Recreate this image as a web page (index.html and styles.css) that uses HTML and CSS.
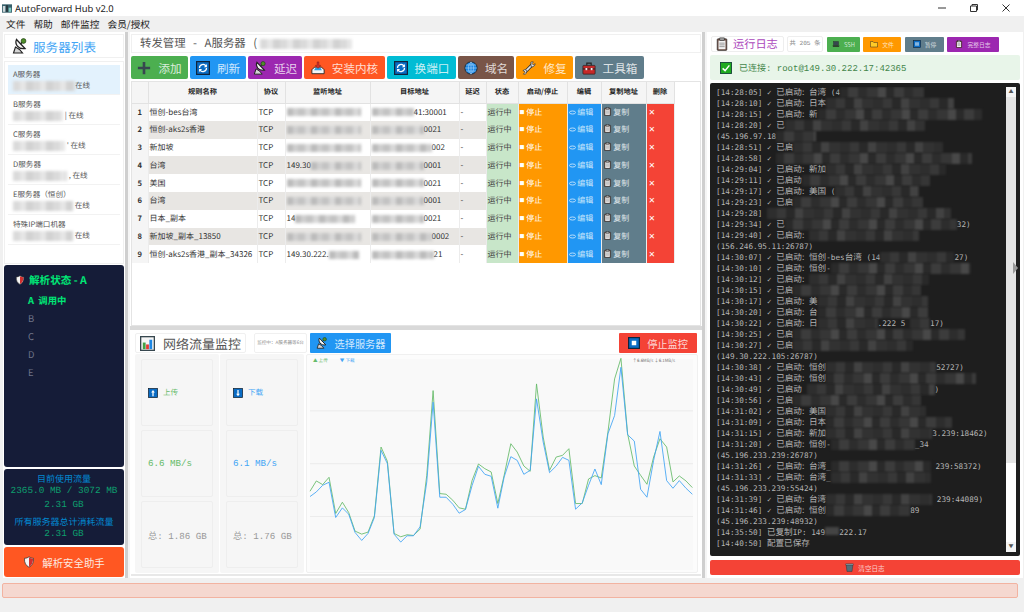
FILE: index.html
```html
<!DOCTYPE html>
<html lang="en">
<head>
  <meta charset="UTF-8">
  <title>AutoForward Hub v2.0</title>
  <link rel="stylesheet" href="styles.css">
</head>
<body>
  <!-- Shared icons -->
  <svg class="icon-defs" width="0" height="0">
    <symbol id="i-dish" viewBox="0 0 16 16">
      <path d="M3.500 9 L1.500 15 H10.500 L7.500 11.500 Z" fill="#d5d5d5" stroke="#222" stroke-width="1.100"/>
      <path d="M4.500 1.500 C2.500 6 6 11.500 13 10.500 Z" fill="#f4f4f4" stroke="#222" stroke-width="1.300"/>
      <path d="M8.500 6 L11 3.500" stroke="#222" stroke-width="1.200"/>
      <circle cx="11.500" cy="3" r="2.400" fill="#4f8f2a" stroke="#1d3a10" stroke-width=".7"/>
    </symbol>
    <symbol id="i-plus" viewBox="0 0 16 16">
      <path d="M6.500 1 H9.500 V6.500 H15 V9.500 H9.500 V15 H6.500 V9.500 H1 V6.500 H6.500 Z" fill="#37474f"/>
    </symbol>
    <symbol id="i-refresh" viewBox="0 0 16 16">
      <rect x=".7" y=".7" width="14.600" height="14.600" fill="#0a6cc4" stroke="#10243c" stroke-width="1.400"/>
      <path d="M4 8 A4 4 0 0 1 11.500 6 M12 8 A4 4 0 0 1 4.500 10" fill="none" stroke="#fff" stroke-width="1.400"/>
      <path d="M12.500 3.500 V7 H9 Z M3.500 12.500 V9 H7 Z" fill="#fff"/>
    </symbol>
    <symbol id="i-tray" viewBox="0 0 16 16">
      <path d="M1 10 L4 7 H12 L15 10 V14.500 H1 Z" fill="#f5f5f5" stroke="#222"/>
      <path d="M3.500 10.500 H12.500 L11 8 H5 Z" fill="#29a0e8"/>
      <path d="M7 1 H9 V5 H11 L8 8.500 L5 5 H7 Z" fill="#d32f2f" stroke="#511" stroke-width=".4"/>
    </symbol>
    <symbol id="i-globe" viewBox="0 0 16 16">
      <circle cx="8" cy="8" r="7" fill="#1e88e5" stroke="#152535"/>
      <path d="M1 8 H15 M8 1 V15 M2.500 4.500 H13.500 M2.500 11.500 H13.500 M8 1 C4 5 4 11 8 15 M8 1 C12 5 12 11 8 15" fill="none" stroke="#bbdefb" stroke-width=".6"/>
    </symbol>
    <symbol id="i-wrench" viewBox="0 0 16 16">
      <path d="M3.500 12.500 L12 4" stroke="#333" stroke-width="3.800"/>
      <path d="M3.500 12.500 L12 4" stroke="#e4e4e4" stroke-width="2"/>
      <path d="M10 1.500 A3.500 3.500 0 0 1 13 1 L11.500 3 L13 4.500 L15 3 A3.500 3.500 0 0 1 10.500 6.500 Z" fill="#e4e4e4" stroke="#333" stroke-width=".8"/>
      <path d="M1 11 A3 3 0 0 1 5.500 11 L5 14 A3 3 0 0 1 1.500 15 L3.500 13 L2.500 11.500 Z" fill="#e4e4e4" stroke="#333" stroke-width=".8"/>
    </symbol>
    <symbol id="i-toolbox" viewBox="0 0 16 16">
      <path d="M5.500 5 V2.500 H10.500 V5" fill="none" stroke="#222" stroke-width="1.300"/>
      <rect x="1" y="5" width="14" height="10" rx="1" fill="#c62828" stroke="#222" stroke-width=".8"/>
      <rect x="1" y="8.500" width="14" height="1.200" fill="#222"/>
      <rect x="4" y="8" width="2" height="2.500" fill="#eee"/>
      <rect x="10" y="8" width="2" height="2.500" fill="#eee"/>
    </symbol>
    <symbol id="i-clip" viewBox="0 0 16 16">
      <rect x="2.500" y="2" width="11" height="13.300" rx="1" fill="#6d4c41" stroke="#222" stroke-width=".7"/>
      <rect x="4" y="4" width="8" height="10" fill="#f2f2f2"/>
      <rect x="5.500" y="1" width="5" height="3" fill="#9e9e9e" stroke="#222" stroke-width=".6"/>
      <path d="M5 7 H11 M5 9 H11 M5 11 H11" stroke="#777" stroke-width=".8"/>
    </symbol>
    <symbol id="i-shield" viewBox="0 0 16 16">
      <path d="M8 1 C10 2.500 12 3 14 3 C14.500 9 12 13 8 15 C4 13 1.500 9 2 3 C4 3 6 2.500 8 1 Z" fill="#f5f5f5" stroke="#333"/>
      <path d="M8 2 V14.500 C11 13 13.500 9 13.500 3.500 C11.500 3.500 9.500 3 8 2 Z" fill="#d32f2f"/>
    </symbol>
    <symbol id="i-chart" viewBox="0 0 16 16">
      <rect x=".7" y=".7" width="14.600" height="14.600" fill="#f5f5f5" stroke="#37474f" stroke-width="1.400"/>
      <rect x="3" y="7" width="3" height="7" fill="#43a047"/>
      <rect x="6.500" y="9" width="3" height="5" fill="#e53935"/>
      <rect x="10" y="4" width="3" height="10" fill="#1e88e5"/>
    </symbol>
    <symbol id="i-stop" viewBox="0 0 16 16">
      <rect x=".8" y=".8" width="14.400" height="14.400" fill="#0a6cc4" stroke="#10243c" stroke-width="1.600"/>
      <rect x="5" y="5" width="6" height="6" fill="#fff"/>
    </symbol>
    <symbol id="i-up" viewBox="0 0 16 16">
      <rect x=".8" y=".8" width="14.400" height="14.400" fill="#0a6cc4" stroke="#123" stroke-width="1.200"/>
      <path d="M8 3 L11 7 H9 V13 H7 V7 H5 Z" fill="#fff"/>
    </symbol>
    <symbol id="i-down" viewBox="0 0 16 16">
      <rect x=".8" y=".8" width="14.400" height="14.400" fill="#0a6cc4" stroke="#123" stroke-width="1.200"/>
      <path d="M8 13 L11 9 H9 V3 H7 V9 H5 Z" fill="#fff"/>
    </symbol>
    <symbol id="i-laptop" viewBox="0 0 16 16">
      <rect x="3" y="3" width="10" height="7.500" fill="#37474f" stroke="#222" stroke-width=".7"/>
      <path d="M1 11 H15 L14 13.500 H2 Z" fill="#222"/>
    </symbol>
    <symbol id="i-folder" viewBox="0 0 16 16">
      <path d="M1 3 H6 L7.500 5 H15 V14 H1 Z" fill="#ffca28" stroke="#222" stroke-width=".9"/>
    </symbol>
    <symbol id="i-pause" viewBox="0 0 16 16">
      <rect x=".8" y=".8" width="14.400" height="14.400" fill="#0a6cc4" stroke="#123" stroke-width="1.200"/>
      <path d="M5 4.500 H7 V11.500 H5 Z M9 4.500 H11 V11.500 H9 Z" fill="#fff"/>
    </symbol>
    <symbol id="i-trash" viewBox="0 0 16 16">
      <path d="M2 3 H14 L12.500 15 H3.500 Z" fill="#546e7a" stroke="#263238" stroke-width=".8"/>
      <rect x="1.500" y="1.500" width="13" height="2" fill="#90a4ae" stroke="#263238" stroke-width=".6"/>
    </symbol>
    <symbol id="i-check" viewBox="0 0 16 16">
      <rect x=".7" y=".7" width="14.600" height="14.600" fill="#1faa1f" stroke="#143" stroke-width="1.200"/>
      <path d="M3.500 8.500 L6.800 11.500 L12.500 4.500" fill="none" stroke="#fff" stroke-width="2"/>
    </symbol>
    <symbol id="i-pencil" viewBox="0 0 16 16">
      <ellipse cx="8" cy="8" rx="7" ry="3.500" fill="none" stroke="#cfe8fb" stroke-width="2"/>
    </symbol>
  </svg>

  <!-- Title bar -->
  <header class="titlebar">
    <svg class="app-icon" viewBox="0 0 12 10"><rect width="12" height="10" fill="#37606b"/><rect x="1" y="2" width="3" height="7" fill="#cfd8dc"/><rect x="5" y="1" width="2" height="8" fill="#263238"/><rect x="8" y="4" width="3" height="5" fill="#80cbc4"/></svg>
    <span class="app-name">AutoForward Hub v2.0</span>
    <div class="win-controls">
      <svg viewBox="0 0 10 10"><path d="M1 5 H9" stroke="#333"/></svg>
      <svg viewBox="0 0 10 10"><path d="M1.500 3 H7.500 V8.500 H1.500 Z M3 3 V1.500 H8.500 V7 H7.500" fill="none" stroke="#333"/></svg>
      <svg viewBox="0 0 10 10"><path d="M1.500 1.500 L8.500 8.500 M8.500 1.500 L1.500 8.500" stroke="#333"/></svg>
    </div>
  </header>

  <!-- Menu -->
  <nav class="menubar">
    <a>文件</a>
    <a>帮助</a>
    <a>邮件监控</a>
    <a>会员/授权</a>
  </nav>

  <main class="main">
    <!-- Left column -->
    <aside class="left">
      <div class="list-title">
        <svg class="ico-16"><use href="#i-dish"/></svg>
        <span>服务器列表</span>
      </div>
      <div class="server-list">
        <div class="server active"><div>A服务器</div><div class="server-sub"><span class="smear w62"></span>在线</div></div>
        <div class="server"><div>B服务器</div><div class="server-sub"><span class="smear w50"></span> | 在线</div></div>
        <div class="server"><div>C服务器</div><div class="server-sub"><span class="smear w52"></span> ' 在线</div></div>
        <div class="server"><div>D服务器</div><div class="server-sub"><span class="smear w54"></span> , 在线</div></div>
        <div class="server"><div>E服务器（恒创）</div><div class="server-sub"><span class="smear w60"></span> 在线</div></div>
        <div class="server"><div>特殊IP端口机器</div><div class="server-sub"><span class="smear w60"></span> 在线</div></div>
      </div>

      <div class="dns-status">
        <div class="dns-title"><svg class="ico-10"><use href="#i-shield"/></svg>解析状态 - A</div>
        <div class="dns-row on">A&nbsp; 调用中</div>
        <div class="dns-row">B</div>
        <div class="dns-row">C</div>
        <div class="dns-row">D</div>
        <div class="dns-row">E</div>
      </div>

      <div class="usage">
        <div class="usage-label">目前使用流量</div>
        <div class="usage-val">2365.0 MB / 3072 MB</div>
        <div class="usage-val tall">2.31 GB</div>
        <div class="usage-label">所有服务器总计消耗流量</div>
        <div class="usage-val">2.31 GB</div>
      </div>

      <button class="safety-btn"><svg class="ico-12"><use href="#i-shield"/></svg>解析安全助手</button>
    </aside>

    <div class="splitter"></div>

    <!-- Center column -->
    <section class="center">
      <div class="forward-title">转发管理 - A服务器 (<span class="smear w92"></span></div>

      <div class="toolbar">
        <button class="tool green w57"><svg class="ico-14"><use href="#i-plus"/></svg>添加</button>
        <button class="tool blue w56"><svg class="ico-14"><use href="#i-refresh"/></svg>刷新</button>
        <button class="tool purple w54"><svg class="ico-14"><use href="#i-dish"/></svg>延迟</button>
        <button class="tool deep w81"><svg class="ico-14"><use href="#i-tray"/></svg>安装内核</button>
        <button class="tool cyan w69"><svg class="ico-14"><use href="#i-refresh"/></svg>换端口</button>
        <button class="tool brown w56"><svg class="ico-14"><use href="#i-globe"/></svg>域名</button>
        <button class="tool orange w57"><svg class="ico-14"><use href="#i-wrench"/></svg>修复</button>
        <button class="tool slate w69"><svg class="ico-14"><use href="#i-toolbox"/></svg>工具箱</button>
      </div>

      <div class="rules-wrap">
        <table class="rules">
          <colgroup>
            <col class="c-no"><col class="c-name"><col class="c-proto"><col class="c-addr"><col class="c-dest"><col class="c-delay"><col class="c-state"><col class="c-run"><col class="c-edit"><col class="c-copy"><col class="c-del">
          </colgroup>
          <thead>
            <tr><th></th><th>规则名称</th><th>协议</th><th>监听地址</th><th>目标地址</th><th>延迟</th><th>状态</th><th>启动/停止</th><th>编辑</th><th>复制地址</th><th>删除</th></tr>
          </thead>
          <tbody>
            <tr><td class="no">1</td><td>恒创-bes台湾</td><td>TCP</td><td><span class="smear cell w74"></span></td><td><span class="smear cell w42"></span>41:30001</td><td>-</td><td class="st">运行中</td><td class="run"><b>■</b> 停止</td><td class="edit"><svg class="ico-7"><use href="#i-pencil"/></svg> 编辑</td><td class="copy"><svg class="ico-9"><use href="#i-clip"/></svg> 复制</td><td class="del">✕</td></tr>
            <tr><td class="no">2</td><td>恒创-aks2s香港</td><td>TCP</td><td><span class="smear cell w74"></span></td><td><span class="smear cell w52"></span>0021</td><td>-</td><td class="st">运行中</td><td class="run"><b>■</b> 停止</td><td class="edit"><svg class="ico-7"><use href="#i-pencil"/></svg> 编辑</td><td class="copy"><svg class="ico-9"><use href="#i-clip"/></svg> 复制</td><td class="del">✕</td></tr>
            <tr><td class="no">3</td><td>新加坡</td><td>TCP</td><td><span class="smear cell w74"></span></td><td><span class="smear cell w60"></span>002</td><td>-</td><td class="st">运行中</td><td class="run"><b>■</b> 停止</td><td class="edit"><svg class="ico-7"><use href="#i-pencil"/></svg> 编辑</td><td class="copy"><svg class="ico-9"><use href="#i-clip"/></svg> 复制</td><td class="del">✕</td></tr>
            <tr><td class="no">4</td><td>台湾</td><td>TCP</td><td>149.30<span class="smear cell w50"></span></td><td><span class="smear cell w52"></span>0001</td><td>-</td><td class="st">运行中</td><td class="run"><b>■</b> 停止</td><td class="edit"><svg class="ico-7"><use href="#i-pencil"/></svg> 编辑</td><td class="copy"><svg class="ico-9"><use href="#i-clip"/></svg> 复制</td><td class="del">✕</td></tr>
            <tr><td class="no">5</td><td>美国</td><td>TCP</td><td><span class="smear cell w74"></span></td><td><span class="smear cell w52"></span>0021</td><td>-</td><td class="st">运行中</td><td class="run"><b>■</b> 停止</td><td class="edit"><svg class="ico-7"><use href="#i-pencil"/></svg> 编辑</td><td class="copy"><svg class="ico-9"><use href="#i-clip"/></svg> 复制</td><td class="del">✕</td></tr>
            <tr><td class="no">6</td><td>台湾</td><td>TCP</td><td><span class="smear cell w74"></span></td><td><span class="smear cell w52"></span>0001</td><td>-</td><td class="st">运行中</td><td class="run"><b>■</b> 停止</td><td class="edit"><svg class="ico-7"><use href="#i-pencil"/></svg> 编辑</td><td class="copy"><svg class="ico-9"><use href="#i-clip"/></svg> 复制</td><td class="del">✕</td></tr>
            <tr><td class="no">7</td><td>日本_副本</td><td>TCP</td><td>14<span class="smear cell w60"></span></td><td><span class="smear cell w52"></span>0021</td><td>-</td><td class="st">运行中</td><td class="run"><b>■</b> 停止</td><td class="edit"><svg class="ico-7"><use href="#i-pencil"/></svg> 编辑</td><td class="copy"><svg class="ico-9"><use href="#i-clip"/></svg> 复制</td><td class="del">✕</td></tr>
            <tr><td class="no">8</td><td>新加坡_副本_13850</td><td>TCP</td><td><span class="smear cell w74"></span></td><td><span class="smear cell w60"></span>0002</td><td>-</td><td class="st">运行中</td><td class="run"><b>■</b> 停止</td><td class="edit"><svg class="ico-7"><use href="#i-pencil"/></svg> 编辑</td><td class="copy"><svg class="ico-9"><use href="#i-clip"/></svg> 复制</td><td class="del">✕</td></tr>
            <tr><td class="no">9</td><td>恒创-aks2s香港_副本_34326</td><td>TCP</td><td>149.30.222.<span class="smear cell w30"></span></td><td><span class="smear cell w62"></span>21</td><td>-</td><td class="st">运行中</td><td class="run"><b>■</b> 停止</td><td class="edit"><svg class="ico-7"><use href="#i-pencil"/></svg> 编辑</td><td class="copy"><svg class="ico-9"><use href="#i-clip"/></svg> 复制</td><td class="del">✕</td></tr>
          </tbody>
        </table>
      </div>

      <div class="hsplit"></div>

      <!-- Traffic monitor -->
      <div class="monitor">
        <div class="monitor-bar">
          <div class="monitor-title"><svg class="ico-15"><use href="#i-chart"/></svg>网络流量监控</div>
          <div class="monitor-note">监控中：A服务器等6台</div>
          <button class="mon-btn select"><svg class="ico-12"><use href="#i-dish"/></svg>选择服务器</button>
          <button class="mon-btn halt"><svg class="ico-12"><use href="#i-stop"/></svg>停止监控</button>
        </div>
        <div class="monitor-body">
          <div class="stat-col">
            <div class="stat"><span class="stat-head up"><svg class="ico-10"><use href="#i-up"/></svg>上传</span></div>
            <div class="stat"><span class="speed up">6.6 MB/s</span></div>
            <div class="stat"><span class="total">总: 1.86 GB</span></div>
          </div>
          <div class="stat-col">
            <div class="stat"><span class="stat-head down"><svg class="ico-10"><use href="#i-down"/></svg>下载</span></div>
            <div class="stat"><span class="speed down">6.1 MB/s</span></div>
            <div class="stat"><span class="total">总: 1.76 GB</span></div>
          </div>
          <div class="chart">
            <div class="legend"><span class="up">▲ 上传</span><span class="down">▼ 下载</span></div>
            <div class="legend-now">↑6.6MB/s ↓6.1MB/s</div>
            <svg class="chart-svg" viewBox="28 100 1148 635" preserveAspectRatio="none">
              <path d="M28 256 H1176 M28 415 H1176 M28 574 H1176" stroke="#e9e9e9" stroke-width="2.400" fill="none"/>
              <polyline class="line-up" points="28,498 47,467 66,478 85,456 105,565 125,531 144,562 163,618 183,627 202,621 221,572 241,365 260,408 280,625 300,635 319,629 338,631 358,612 378,450 397,195 417,505 436,507 456,525 475,548 494,552 514,465 533,416 552,430 571,440 591,535 610,450 630,355 649,380 669,422 688,438 707,175 727,335 746,435 766,395 785,390 804,370 824,535 844,535 863,461 882,451 901,458 921,320 941,160 960,98 980,325 1000,422 1019,450 1038,477 1058,395 1077,340 1097,365 1116,470 1135,452 1155,467 1174,487"/>
              <polyline class="line-down" points="28,514 47,500 66,480 85,471 105,577 125,548 144,567 163,622 183,646 202,625 221,577 241,375 260,415 280,627 300,651 319,632 338,632 358,605 378,470 397,230 417,516 436,516 456,537 475,564 494,553 514,480 533,423 552,447 571,453 591,549 610,455 630,394 649,405 669,447 688,435 707,220 727,350 746,442 766,422 785,396 804,405 824,552 844,533 863,480 882,431 901,478 921,325 941,270 960,125 980,328 1000,347 1019,492 1038,516 1058,405 1077,318 1097,466 1116,489 1135,466 1155,489 1174,507"/>
            </svg>
          </div>
        </div>
      </div>
    </section>

    <div class="splitter"></div>

    <!-- Right column -->
    <section class="right">
      <div class="log-head">
        <div class="log-title"><svg class="ico-14"><use href="#i-clip"/></svg>运行日志</div>
        <div class="log-count">共 205 条</div>
        <button class="log-btn b-ssh"><svg class="ico-8"><use href="#i-laptop"/></svg>SSH</button>
        <button class="log-btn b-file"><svg class="ico-8"><use href="#i-folder"/></svg>文件</button>
        <button class="log-btn b-pause"><svg class="ico-8"><use href="#i-pause"/></svg>暂停</button>
        <button class="log-btn b-full"><svg class="ico-8"><use href="#i-clip"/></svg>完整日志</button>
      </div>
      <div class="conn"><svg class="ico-12"><use href="#i-check"/></svg>已连接: root@149.30.222.17:42365</div>

      <div class="log-box">
        <div class="log-lines">
          <div>[14:28:05] ✓ <span class="zh">已启动:</span> <span class="zh">台湾</span> (4<span class="mosaic w84"></span></div>
          <div>[14:28:10] ✓ <span class="zh">已启动:</span> <span class="zh">日本</span><span class="mosaic w128"></span></div>
          <div>[14:28:15] ✓ <span class="zh">已启动:</span> <span class="zh">新</span><span class="mosaic w164"></span></div>
          <div>[14:28:20] ✓ <span class="zh">已</span><span class="mosaic w140"></span></div>
          <div>(45.196.97.18<span class="mosaic w40"></span></div>
          <div>[14:28:51] ✓ <span class="zh">已启</span><span class="mosaic w150"></span></div>
          <div>[14:28:58] ✓ <span class="mosaic w196"></span></div>
          <div>[14:29:04] ✓ <span class="zh">已启动:</span> <span class="zh">新加</span><span class="mosaic w120"></span></div>
          <div>[14:29:11] ✓ <span class="zh">已启动</span><span class="mosaic w128"></span></div>
          <div>[14:29:17] ✓ <span class="zh">已启动:</span> <span class="zh">美国</span> (<span class="mosaic w84"></span></div>
          <div>[14:29:23] ✓ <span class="zh">已启</span><span class="mosaic w130"></span></div>
          <div>[14:29:28] <span class="mosaic w184"></span></div>
          <div>[14:29:34] ✓ <span class="zh">已</span><span class="mosaic w172"></span>32)</div>
          <div>[14:29:40] ✓ <span class="zh">已启动:</span> <span class="mosaic w110"></span></div>
          <div>(156.246.95.11:26787)</div>
          <div>[14:30:07] ✓ <span class="zh">已启动:</span> <span class="zh">恒创</span>-bes<span class="zh">台湾</span> (14<span class="mosaic w74"></span>27)</div>
          <div>[14:30:10] ✓ <span class="zh">已启动:</span> <span class="zh">恒创</span>-<span class="mosaic w140"></span></div>
          <div>[14:30:12] ✓ <span class="zh">已启动:</span> <span class="mosaic w120"></span></div>
          <div>[14:30:15] ✓ <span class="zh">已启</span><span class="mosaic w128"></span></div>
          <div>[14:30:17] ✓ <span class="zh">已启动:</span> <span class="zh">美</span><span class="mosaic w110"></span></div>
          <div>[14:30:20] ✓ <span class="zh">已启动:</span> <span class="zh">台</span><span class="mosaic w110"></span></div>
          <div>[14:30:22] ✓ <span class="zh">已启动:</span> <span class="zh">日</span><span class="mosaic w60"></span>.222 5 <span class="mosaic w20"></span>17)</div>
          <div>[14:30:25] ✓ <span class="zh">已启</span><span class="mosaic w172"></span></div>
          <div>[14:30:27] ✓ <span class="zh">已启</span><span class="mosaic w120"></span></div>
          <div>(149.30.222.105:26787)</div>
          <div>[14:30:38] ✓ <span class="zh">已启动:</span> <span class="zh">恒创</span><span class="mosaic w110"></span>52727)</div>
          <div>[14:30:43] ✓ <span class="zh">已启动:</span> <span class="zh">恒创</span><span class="mosaic w150"></span></div>
          <div>[14:30:49] ✓ <span class="zh">已启动</span> <span class="mosaic w128"></span>)</div>
          <div>[14:30:56] ✓ <span class="zh">已启</span><span class="mosaic w128"></span></div>
          <div>[14:31:02] ✓ <span class="zh">已启动:</span> <span class="zh">美国</span><span class="mosaic w100"></span></div>
          <div>[14:31:09] ✓ <span class="zh">已启动:</span> <span class="zh">日本</span><span class="mosaic w126"></span></div>
          <div>[14:31:15] ✓ <span class="zh">已启动:</span> <span class="zh">新加</span><span class="mosaic w106"></span>3.239:18462)</div>
          <div>[14:31:20] ✓ <span class="zh">已启动:</span> <span class="zh">恒创</span>-<span class="mosaic w84"></span>_34</div>
          <div>(45.196.233.239:26787)</div>
          <div>[14:31:26] ✓ <span class="zh">已启动:</span> <span class="zh">台湾</span>_<span class="mosaic w100"></span> 239:58372)</div>
          <div>[14:31:33] ✓ <span class="zh">已启动:</span> <span class="zh">台湾</span>_<span class="mosaic w100"></span></div>
          <div>(45.196.233.239:55424)</div>
          <div>[14:31:39] ✓ <span class="zh">已启动:</span> <span class="zh">台湾</span><span class="mosaic w106"></span> 239:44089)</div>
          <div>[14:31:46] ✓ <span class="zh">已启动:</span> <span class="zh">恒创</span><span class="mosaic w84"></span>89</div>
          <div>(45.196.233.239:48932)</div>
          <div>[14:35:50] <span class="zh">已复制</span>IP: 149<span class="smear-dark"></span>222.17</div>
          <div>[14:40:50] <span class="zh">配置已保存</span></div>
        </div>
        <div class="scroll">
          <span class="scroll-btn">▲</span>
          <span class="scroll-thumb"></span>
          <span class="scroll-btn">▼</span>
        </div>
        <span class="grip"></span>
      </div>

      <button class="clear-btn"><svg class="ico-9"><use href="#i-trash"/></svg>清空日志</button>
    </section>
  </main>

  <div class="statusbar"></div>
</body>
</html>
```

FILE: styles.css
```css
* {
  box-sizing: border-box;
}
body {
  margin: 0;
  width: 1024px;
  height: 612px;
  overflow: hidden;
  background-color: #f0f0f0;
  font-family: "Noto Sans CJK SC", "Noto Sans", sans-serif;
  color: #333;
  text-rendering: geometricPrecision;
}
button {
  font-family: inherit;
  cursor: pointer;
}
svg {
  flex: none;
}
.icon-defs {
  position: absolute;
}
.ico-7 { width: 7px; height: 7px; vertical-align: -1px; }
.ico-8 { width: 8px; height: 8px; }
.ico-9 { width: 9px; height: 9px; vertical-align: -1px; }
.ico-10 { width: 10px; height: 10px; }
.ico-12 { width: 12px; height: 12px; }
.ico-14 { width: 14px; height: 14px; }
.ico-15 { width: 15px; height: 15px; }
.ico-16 { width: 16px; height: 16px; }

/* title bar + menu */
.titlebar {
  height: 16px;
  background-color: #fff;
  display: flex;
  align-items: center;
  padding-left: 2px;
}
.app-icon {
  width: 10px;
  height: 9px;
}
.app-name {
  margin-left: 3px;
  font-family: "Noto Sans", sans-serif;
  font-size: 9.4px;
  color: #222;
}
.win-controls {
  margin-left: auto;
  display: flex;
  gap: 22px;
  padding-right: 13px;
}
.win-controls svg {
  width: 10px;
  height: 10px;
}
.menubar {
  height: 16px;
  display: flex;
  gap: 8px;
  padding-left: 6px;
  align-items: center;
  font-size: 9.7px;
  color: #222;
}

/* main area */
.main {
  display: flex;
  height: 546px;
}
.splitter {
  width: 5px;
  background-color: #f5f5f5;
  border-left: 3px solid #cfcfcf;
}
.left {
  width: 122px;
  margin-left: 3px;
  padding: 2px 1px 1px;
  background-color: #fff;
  display: flex;
  flex-direction: column;
}
.list-title {
  height: 24px;
  border: 1px solid #f0f0f0;
  display: flex;
  align-items: center;
  gap: 5px;
  padding-left: 7px;
  font-size: 12.6px;
  color: #42a5f5;
}
.server-list {
  margin-top: 3px;
  height: 203px;
  padding: 3px;
  border: 1px solid #f0f0f0;
  display: flex;
  flex-direction: column;
}
.server {
  height: 30px;
  padding: 4px 0 0 5px;
  font-size: 7.6px;
  line-height: 11px;
  color: #555;
  border-bottom: 1px solid #f2f2f2;
}
.server.active {
  background-color: #e3f2fd;
}
.server-sub {
  white-space: nowrap;
}
.smear {
  display: inline-block;
  height: 10px;
  vertical-align: middle;
  background: repeating-linear-gradient(90deg, #dadada 0 7px, #e6e6e6 7px 13px, #d2d2d2 13px 20px);
  filter: blur(1.500px);
}
.smear.cell {
  height: 8px;
  background: repeating-linear-gradient(90deg, #bbb 0 6px, #cfcfcf 6px 11px, #c3c3c3 11px 18px, #d8d8d8 18px 24px);
}
.w30 { width: 30px; }
.w42 { width: 42px; }
.w50 { width: 50px; }
.w52 { width: 52px; }
.w54 { width: 54px; }
.w60 { width: 60px; }
.w62 { width: 62px; }
.w74 { width: 74px; }
.w92 { width: 92px; }

.dns-status {
  margin-top: 1px;
  height: 202px;
  padding: 9px 0 0 11px;
  border-radius: 3px;
  background-color: #151c38;
}
.dns-title {
  display: flex;
  align-items: center;
  gap: 4px;
  font-size: 10.6px;
  font-weight: bold;
  color: #00e676;
  height: 12px;
}
.dns-row {
  margin-left: 13px;
  height: 18px;
  line-height: 18px;
  font-size: 9.400px;
  color: #6f7488;
}
.dns-row:nth-child(2) {
  margin-top: 5px;
}
.dns-row.on {
  color: #00e676;
  font-weight: bold;
}
.usage {
  margin-top: 2px;
  height: 76px;
  padding-top: 3px;
  border-radius: 3px;
  background-color: #151c38;
  text-align: center;
}
.usage-label {
  font-size: 9px;
  line-height: 13px;
  color: #0288d1;
}
.usage-val {
  font-family: "Liberation Mono", "Noto Sans CJK SC", monospace;
  font-size: 9.400px;
  line-height: 12px;
  color: #0e9f6e;
}
.usage-val.tall {
  line-height: 15px;
  padding-bottom: 3px;
}
.safety-btn {
  margin-top: 2px;
  height: 30px;
  border: none;
  border-radius: 3px;
  background-color: #ff5722;
  color: #fbe9e0;
  font-size: 10.400px;
  display: flex;
  align-items: center;
  justify-content: center;
  gap: 7px;
}

/* center */
.center {
  width: 572px;
  padding: 2px 1px 0;
  background-color: #fff;
  display: flex;
  flex-direction: column;
}
.forward-title {
  height: 19px;
  padding-left: 8px;
  line-height: 17px;
  border: 1px solid #f0f0f0;
  font-size: 11.400px;
  word-spacing: 5px;
  color: #555;
  white-space: nowrap;
}
.forward-title .smear {
  margin-left: 3px;
}
.toolbar {
  margin-top: 3px;
  height: 23px;
  display: flex;
  gap: 2px;
}
.tool {
  height: 23px;
  padding: 0;
  border: none;
  border-radius: 2px;
  font-size: 11.600px;
  color: rgba(255, 255, 255, .8);
  display: flex;
  align-items: center;
  justify-content: center;
  gap: 7px;
}
.tool.w57 { width: 57px; }
.tool.w56 { width: 56px; }
.tool.w54 { width: 54px; }
.tool.w81 { width: 81px; }
.tool.w69 { width: 69px; }
.green { background-color: #4caf50; }
.blue { background-color: #2196f3; }
.purple { background-color: #9c27b0; }
.deep { background-color: #ff5722; }
.cyan { background-color: #00bcd4; }
.brown { background-color: #795548; }
.orange { background-color: #ff9800; }
.slate { background-color: #607d8b; }

.rules-wrap {
  margin-top: 2px;
  height: 245px;
  border: 1px solid #e4e4e4;
  overflow: hidden;
}
.rules {
  table-layout: fixed;
  width: 542px;
  border-collapse: collapse;
  font-size: 8px;
}
.c-no { width: 16px; }
.c-name { width: 109px; }
.c-proto { width: 28px; }
.c-addr { width: 85px; }
.c-dest { width: 89px; }
.c-delay { width: 27px; }
.c-state { width: 32px; }
.c-run { width: 49px; }
.c-edit { width: 34px; }
.c-copy { width: 45px; }
.c-del { width: 28px; }
.rules th {
  height: 21px;
  padding: 0;
  background-color: #f5f5f5;
  border-right: 1px solid #e2e2e2;
  border-bottom: 1px solid #e2e2e2;
  font-size: 7.200px;
  color: #222;
}
.rules td {
  height: 17.800px;
  padding: 0 1px;
  border-right: 1px solid #ececec;
  white-space: nowrap;
  overflow: hidden;
}
.rules tbody tr:nth-child(even) td {
  background-color: #e8e6e3;
}
.rules tbody tr td.no {
  text-align: center;
  font-weight: bold;
  font-size: 7.600px;
  background-color: #f5f5f5;
}
.rules tbody tr td.st {
  background-color: #c8e6c9;
  color: #444;
}
.rules tbody tr td.run {
  background-color: #ff9800;
  color: #fff;
}
.run b {
  font-size: 5px;
  vertical-align: 1px;
}
.rules tbody tr td.edit {
  background-color: #2196f3;
  color: #cfe8fb;
}
.rules tbody tr td.copy {
  background-color: #607d8b;
  color: #dde4e8;
}
.rules tbody tr td.del {
  background-color: #f44336;
  color: #fff;
  padding-left: 2px;
}

.hsplit {
  height: 4px;
  margin: 0 -1px;
  background-color: #d9d9d9;
}
.monitor {
  margin-top: 0;
  height: 246px;
  padding: 3px 3px 3px;
  border-bottom: 2px solid #e8e8e8;
}
.monitor-bar {
  height: 20px;
  display: flex;
  align-items: center;
}
.monitor-title {
  width: 111px;
  height: 20px;
  margin-left: 1px;
  border: 1px solid #f0f0f0;
  border-radius: 2px;
  display: flex;
  align-items: center;
  gap: 8px;
  padding-left: 4px;
  font-size: 13px;
  color: #555;
  white-space: nowrap;
}
.monitor-note {
  width: 53px;
  height: 20px;
  margin-left: 8px;
  line-height: 19px;
  border: 1px solid #f0f0f0;
  border-radius: 2px;
  font-size: 4.600px;
  color: #888;
  text-align: center;
  white-space: nowrap;
}
.mon-btn {
  height: 20px;
  padding: 0;
  border: none;
  border-radius: 1px;
  color: rgba(255, 255, 255, .8);
  font-size: 10.200px;
  display: flex;
  align-items: center;
  justify-content: center;
  gap: 7px;
}
.mon-btn.select {
  width: 81px;
  margin-left: 3px;
  background-color: #2196f3;
}
.mon-btn.halt {
  width: 78px;
  margin-left: auto;
  margin-right: 1px;
  background-color: #f44336;
}
.monitor-body {
  margin-top: 1px;
  height: 219px;
  display: flex;
  gap: 1px;
  padding-left: 1px;
}
.stat-col {
  width: 84px;
  padding: 5px 6px;
  background-color: #f6f6f6;
  border-radius: 2px;
  display: flex;
  flex-direction: column;
  gap: 4px;
}
.stat {
  flex: 1;
  padding-left: 6px;
  border: 1px solid #eeeeee;
  border-radius: 2px;
  display: flex;
  align-items: center;
}
.stat-head {
  display: flex;
  align-items: center;
  gap: 5px;
  font-size: 7.600px;
}
.up { color: #66bb6a; }
.down { color: #42a5f5; }
.speed {
  font-family: "Liberation Mono", monospace;
  font-size: 9.200px;
}
.total {
  font-family: "Liberation Mono", "Noto Sans CJK SC", monospace;
  font-size: 9.200px;
  color: #999;
}
.chart {
  position: relative;
  width: 392px;
  margin-left: 1px;
  padding: 4px 3px;
  background-color: #fcfcfc;
  border: 1px solid #f0f0f0;
  border-radius: 2px;
}
.chart-svg {
  display: block;
  width: 383px;
  height: 211px;
  background-color: #f9f9f9;
  overflow: visible;
}
.chart-svg polyline {
  fill: none;
  stroke-width: 2.600;
}
.line-up { stroke: #66bb6a; }
.line-down { stroke: #42a5f5; }
.legend {
  position: absolute;
  left: 6px;
  top: 3px;
  display: flex;
  gap: 12px;
  font-size: 4.600px;
}
.legend-now {
  position: absolute;
  right: 22px;
  top: 3px;
  font-size: 4.400px;
  color: #777;
}

/* right */
.right {
  width: 316px;
  padding: 4px 3px 0;
  background-color: #fff;
  display: flex;
  flex-direction: column;
}
.log-head {
  height: 16px;
  display: flex;
  align-items: center;
  padding-left: 1px;
}
.log-title {
  width: 73px;
  height: 16px;
  border: 1px solid #eeeeee;
  border-radius: 2px;
  display: flex;
  align-items: center;
  gap: 4px;
  padding-left: 3px;
  font-size: 11.200px;
  color: #ab47bc;
}
.log-count {
  width: 36px;
  height: 16px;
  margin-left: 3px;
  border: 1px solid #eeeeee;
  border-radius: 2px;
  text-align: center;
  line-height: 14px;
  font-family: "Liberation Mono", "Noto Sans CJK SC", monospace;
  font-size: 6.200px;
  color: #888;
}
.log-btn {
  height: 15px;
  padding: 0;
  margin-left: 3px;
  border: none;
  border-radius: 1px;
  font-size: 5.800px;
  color: rgba(255, 255, 255, .75);
  display: flex;
  align-items: center;
  justify-content: center;
  gap: 4px;
}
.b-ssh { width: 33px; background-color: #4caf50; margin-left: 4px; }
.b-file { width: 38px; background-color: #ff9800; }
.b-pause { width: 39px; background-color: #607d8b; margin-left: 4px; }
.b-full { width: 52px; background-color: #9c27b0; }
.conn {
  margin-top: 3px;
  height: 25px;
  padding-left: 10px;
  border-radius: 2px;
  background-color: #e8f5e9;
  display: flex;
  align-items: center;
  gap: 7px;
  font-family: "Liberation Mono", "Noto Sans CJK SC", monospace;
  font-size: 9px;
  color: #43854a;
}
.log-box {
  position: relative;
  margin-top: 3px;
  height: 473px;
  padding: 4px 4px 0 6px;
  border-radius: 2px;
  background-color: #1e1e1e;
  display: flex;
  overflow: hidden;
}
.log-lines {
  flex: 1;
  font-family: "DejaVu Sans Mono", "Noto Sans CJK SC", monospace;
  font-size: 7.700px;
  line-height: 11px;
  color: #b4b4b4;
  white-space: nowrap;
  overflow: hidden;
}
.log-lines > div {
  height: 11px;
}
.zh {
  font-family: "Noto Sans CJK SC", sans-serif;
  font-size: 8.600px;
}
.mosaic {
  display: inline-block;
  height: 11px;
  vertical-align: top;
  background: repeating-linear-gradient(90deg, #2e2e2e 0 10px, #383838 10px 19px, #292929 19px 28px, #424242 28px 36px, #323232 36px 47px);
  filter: blur(1px);
}
.log-lines > div:nth-child(odd) .mosaic {
  background: repeating-linear-gradient(90deg, #2a2a2a 0 8px, #3c3c3c 8px 18px, #2d2d2d 18px 27px, #363636 27px 38px, #484848 38px 46px);
}
.mosaic.w20 { width: 20px; }
.mosaic.w40 { width: 40px; }
.mosaic.w60 { width: 60px; }
.mosaic.w74 { width: 74px; }
.mosaic.w84 { width: 84px; }
.mosaic.w100 { width: 100px; }
.mosaic.w106 { width: 106px; }
.mosaic.w110 { width: 110px; }
.mosaic.w120 { width: 120px; }
.mosaic.w126 { width: 126px; }
.mosaic.w128 { width: 128px; }
.mosaic.w130 { width: 130px; }
.mosaic.w140 { width: 140px; }
.mosaic.w150 { width: 150px; }
.mosaic.w164 { width: 164px; }
.mosaic.w172 { width: 172px; }
.mosaic.w184 { width: 184px; }
.mosaic.w196 { width: 196px; }
.smear-dark {
  display: inline-block;
  width: 14px;
  height: 8px;
  background-color: #444;
  filter: blur(1px);
}
.scroll {
  width: 10px;
  height: 465px;
  background-color: #fff;
  display: flex;
  flex-direction: column;
}
.scroll-btn {
  height: 10px;
  font-size: 5px;
  line-height: 10px;
  text-align: center;
  color: #555;
  background-color: #f4f4f4;
}
.scroll-thumb {
  height: 366px;
  background-color: #e4e4e4;
  margin-bottom: auto;
}
.grip {
  position: absolute;
  right: 2px;
  top: 179px;
  width: 0;
  height: 0;
  border-left: 5px solid #999;
  border-top: 6px solid transparent;
  border-bottom: 6px solid transparent;
}
.clear-btn {
  margin-top: 4px;
  height: 15px;
  padding: 0;
  border: none;
  border-radius: 2px;
  background-color: #f44336;
  color: rgba(255, 255, 255, .75);
  font-size: 6.600px;
  display: flex;
  align-items: center;
  justify-content: center;
  gap: 4px;
}

.statusbar {
  height: 15px;
  margin: 5px 6px 0 2px;
  background-color: #f5d8d0;
  border: 1px solid #f2b3a1;
  border-radius: 2px;
}
```
